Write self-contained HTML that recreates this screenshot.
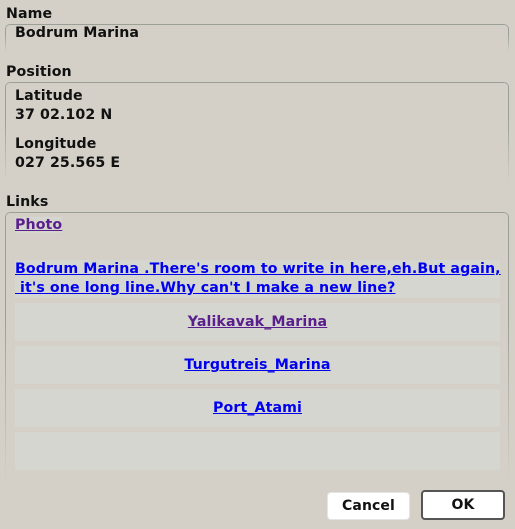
<!DOCTYPE html>
<html><head><style>
html,body{margin:0;padding:0;width:515px;height:529px;overflow:hidden;background:#d4d0c8;font-family:"DejaVu Sans","Liberation Sans",sans-serif;font-size:14.2px;font-weight:bold;color:#111;letter-spacing:0.1px;}
.lbl{position:absolute;left:6px;}
.box{position:absolute;left:5px;width:504px;}
.box:before{content:"";position:absolute;inset:0;border:1px solid #9aa096;border-bottom:none;border-radius:5px 5px 0 0;-webkit-mask-image:linear-gradient(#000 0,#000 40%,transparent 100%);mask-image:linear-gradient(#000 0,#000 40%,transparent 100%);}
.t{position:absolute;left:15px;}
.row{position:absolute;left:15px;width:485px;background:#d4d6cf;text-align:center;}
.btn{position:absolute;background:#fff;border-radius:4px;text-align:center;font-size:14px;}
</style></head><body>
<div class="lbl" style="top:6px">Name</div>
<div class="box" style="top:24px;height:28px"></div>
<div class="t" style="top:25px">Bodrum Marina</div>
<div class="lbl" style="top:64px">Position</div>
<div class="box" style="top:82px;height:100px"></div>
<div class="t" style="top:88px">Latitude</div>
<div class="t" style="top:107px">37 02.102 N</div>
<div class="t" style="top:136px">Longitude</div>
<div class="t" style="top:155px">027 25.565 E</div>
<div class="lbl" style="top:194px">Links</div>
<div class="box" style="top:212px;height:270px"></div>
<div class="t" style="top:217px;background:#d4d6cf;color:#5a1f8c;text-decoration:underline">Photo</div>
<div class="row" style="top:260px;height:38px;text-align:left;color:#0000ee;line-height:19px;white-space:nowrap"><span style="text-decoration:underline">Bodrum Marina .There's room to write in here,eh.But again,</span><br><span style="text-decoration:underline">&nbsp;it's one long line.Why can't I make a new line?</span></div>
<div class="row" style="top:303px;height:38px;line-height:38px;color:#5a1f8c"><span style="text-decoration:underline">Yalikavak_Marina</span></div>
<div class="row" style="top:346px;height:38px;line-height:38px;color:#0000ee"><span style="text-decoration:underline">Turgutreis_Marina</span></div>
<div class="row" style="top:389px;height:38px;line-height:38px;color:#0000ee"><span style="text-decoration:underline">Port_Atami</span></div>
<div class="row" style="top:432px;height:38px;"></div>
<div class="btn" style="left:327px;top:492px;width:81px;height:26px;line-height:26px;border:1px solid #e4e4e4;">Cancel</div>
<div class="btn" style="left:421px;top:490px;width:80px;height:26px;line-height:26px;border:2px solid #555;">OK</div>
</body></html>
